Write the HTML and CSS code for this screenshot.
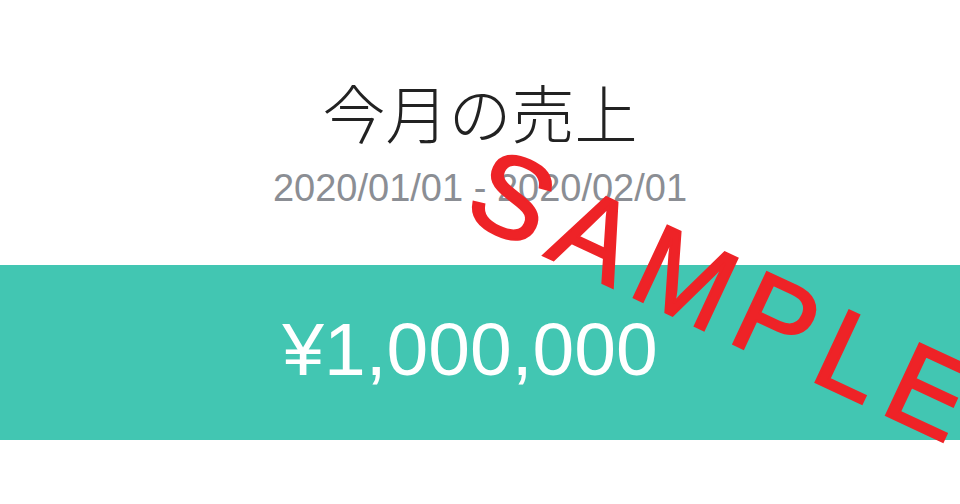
FILE: index.html
```html
<!DOCTYPE html>
<html lang="ja">
<head>
  <meta charset="UTF-8" />
  <meta name="viewport" content="width=device-width, initial-scale=1.0"/>
  <title>今月の売上</title>
  <link rel="stylesheet" href="styles.css">
</head>
<body>
  <div class="sales-card">
    <div class="sales-head">
      <h1>今月の売上</h1>
      <p class="period">2020/01/01 - 2020/02/01</p>
    </div>
    <div class="amount">¥1,000,000</div>
  </div>

  <div class="stamp">SAMPLE</div>
</body>
</html>
```

FILE: styles.css
```css
body {
  margin: 0;
  background: #fff;
  font-family: "Liberation Sans", Arial, "Noto Sans CJK JP", sans-serif;
  overflow: hidden;
}

.sales-card {
  width: 960px;
  height: 504px;
}

.sales-head {
  padding-top: 73px;
  text-align: center;
}

.sales-head h1 {
  margin: 0;
  font-family: "Noto Sans CJK JP", sans-serif;
  font-size: 63px;
  font-weight: 300;
  line-height: 76px;
  color: #222;
}

.period {
  margin: 17px 0 0;
  font-size: 38px;
  line-height: 44px;
  color: #8b8e94;
}

.amount {
  margin-top: 55px;
  height: 175px;
  padding: 0 20px 8px 0;
  box-sizing: border-box;
  display: flex;
  align-items: center;
  justify-content: center;
  background: #42c6b2;
  color: #fff;
  font-size: 75px;
}

/* stamp overlay, rotated around its top-left corner */
.stamp {
  position: absolute;
  left: 502px;
  top: 129px;
  font-size: 115px;
  line-height: 1;
  letter-spacing: 14px;
  white-space: nowrap;
  color: #ee2327;
  -webkit-text-stroke: 2.5px #ee2327;
  transform: rotate(25deg);
  transform-origin: 0 0;
}
```
